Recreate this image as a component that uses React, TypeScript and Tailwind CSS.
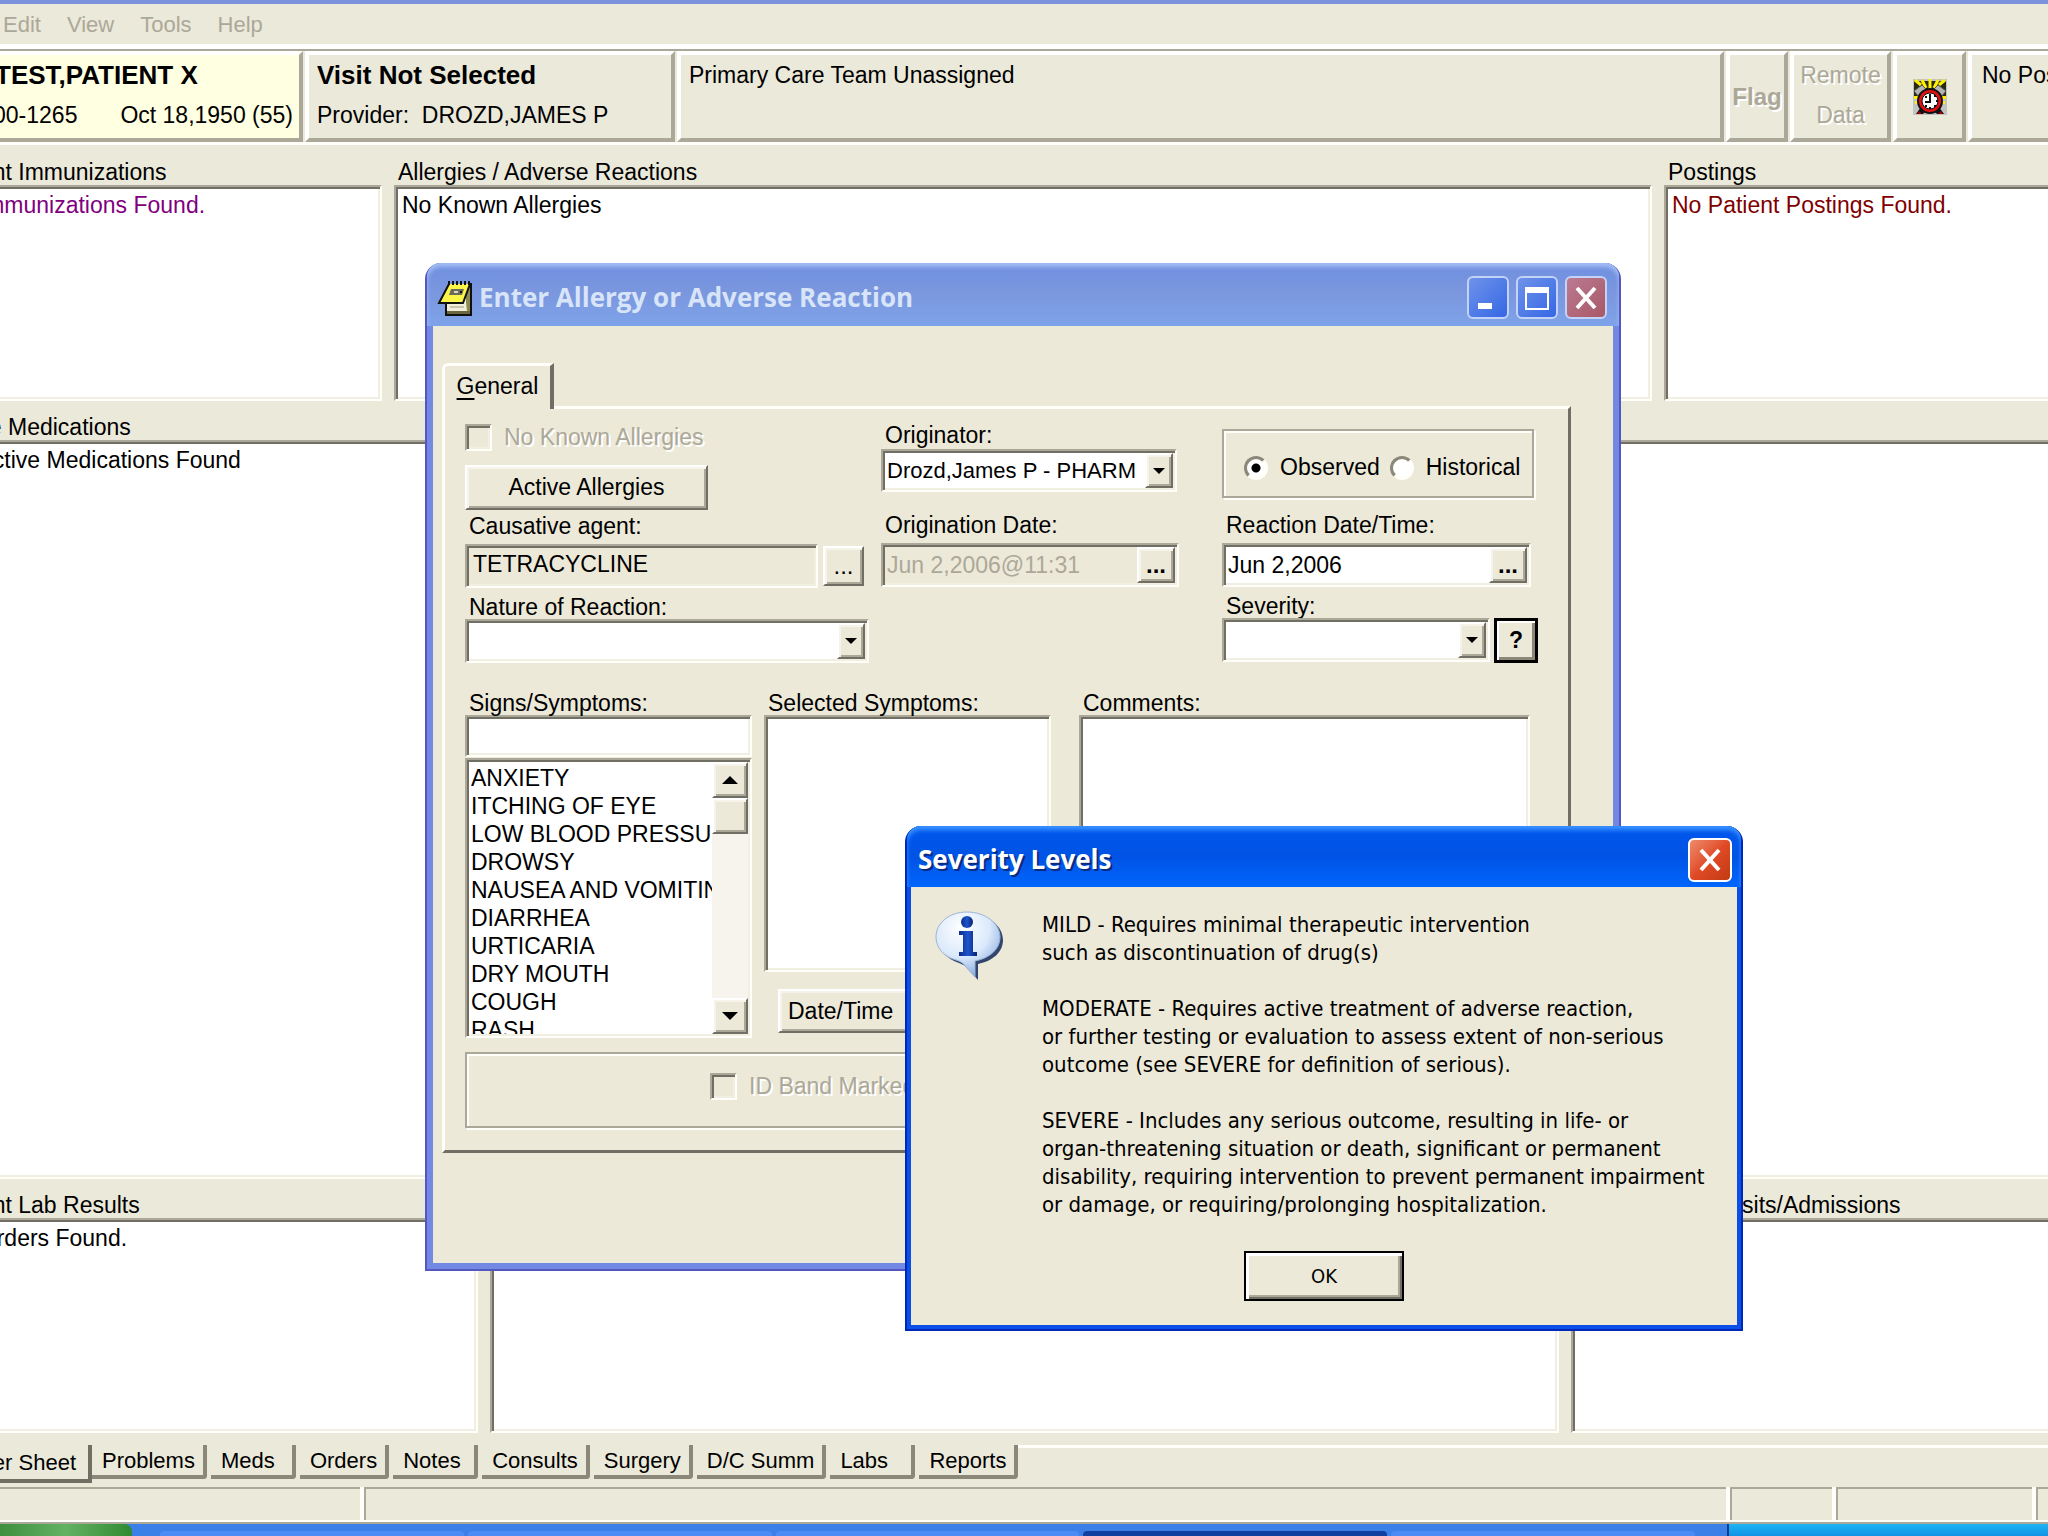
import React from "react";

const SUNKEN =
  "border-2 border-t-[#aca899] border-l-[#aca899] border-r-[#fffef8] border-b-[#fffef8] shadow-[inset_2px_2px_0_#716f64,inset_-2px_-2px_0_#f1efe2]";
const RAISED =
  "border-2 border-t-white border-l-white border-r-[#716f64] border-b-[#716f64] bg-[#ece9d8] shadow-[inset_2px_2px_0_#f6f4ea,inset_-2px_-2px_0_#aca899]";
const ETCHED =
  "border-2 border-[#aca899] shadow-[inset_2px_2px_0_#fffef8,2px_2px_0_#fffef8]";
const HEADER_PANEL =
  "border-t-4 border-l-4 border-r-4 border-b-4 border-t-white border-l-white border-r-[#aca899] border-b-[#aca899]";
const EMBOSSED = "text-[#aca899] [text-shadow:2px_2px_0_#fff]";

const symptoms = [
  "ANXIETY",
  "ITCHING OF EYE",
  "LOW BLOOD PRESSURE",
  "DROWSY",
  "NAUSEA AND VOMITING",
  "DIARRHEA",
  "URTICARIA",
  "DRY MOUTH",
  "COUGH",
  "RASH",
];

const chartTabs = [
  "Problems",
  "Meds",
  "Orders",
  "Notes",
  "Consults",
  "Surgery",
  "D/C Summ",
  "Labs",
  "Reports",
];

/* ---------- icons ---------- */

const NotepadIcon = () => (
  <svg width="36" height="36" viewBox="0 0 36 36" className="shrink-0" aria-hidden="true">
    <path d="M9 17h25v18H9z" fill="#f1efdc" />
    <path d="M9 31h25v4H9z" fill="#6b6840" />
    <path d="M29 5h5v26h-5z" fill="#8d8a50" />
    <path d="M28 14l2 17h-2z" fill="#f1efdc" />
    <path d="M12 4 33 4 26 23 2 23z" fill="#fbf549" />
    <path d="M12 4 2 23h24l7-19M34 3v32H9V24" fill="none" stroke="#111" strokeWidth="2" />
    <path d="M14 9h13l-2 6H12z" fill="#6b6b58" />
    <path d="M17 11h4v2h-4z" fill="#d8d8c8" />
    <path d="M23 11h2v2h-2z" fill="#111" />
    <path d="M11 3h24" stroke="#111" strokeWidth="4" strokeDasharray="2 2" />
    <path d="M13 27h14" stroke="#c9c5a8" strokeWidth="2" />
  </svg>
);

const AlarmIcon = () => (
  <svg width="34" height="36" viewBox="0 0 34 36" aria-hidden="true">
    <path d="M0 0h34v36H0z" fill="#c3c3c3" />
    <path d="M1 2h32v16H1z" fill="#2a2a12" />
    <path
      d="M17 10V0M13 9 9 1M21 9l4-8M8 6 2 1M26 6l6-5"
      stroke="#fdf000"
      strokeWidth="3"
    />
    <path d="M1 12 9 6l5 5-8 7zM33 12l-8-6-5 5 8 7z" fill="#b4b4b4" stroke="#555" strokeWidth="1" />
    <path d="M1 17h4v3H1zM2 22h3v3H2zM29 17h4v3h-4zM29 22h3v3h-3z" fill="#fdf000" />
    <path d="M8 28 3 35h7l4-4zM26 28l5 7h-7l-4-4z" fill="#111" />
    <path d="M6 32l-2 3h5zM28 32l2 3h-5z" fill="#a00000" />
    <circle cx="17" cy="22" r="13" fill="#111" />
    <circle cx="17" cy="22" r="11" fill="#e01010" />
    <circle cx="17" cy="22" r="8" fill="#fff" stroke="#111" strokeWidth="1" />
    <path d="M17 15v8h-5" fill="none" stroke="#111" strokeWidth="2" />
    <path d="M21 17h2M23 22h2M21 27h2M16 29h2M12 27h2M12 18h2" stroke="#111" strokeWidth="2" />
  </svg>
);

const InfoIcon = () => (
  <svg width="70" height="70" viewBox="0 0 70 70" className="shrink-0" aria-hidden="true">
    <defs>
      <radialGradient id="bubble" cx="0.4" cy="0.25" r="0.8">
        <stop offset="0" stopColor="#ffffff" />
        <stop offset="0.55" stopColor="#dbe9fb" />
        <stop offset="1" stopColor="#7fa5dc" />
      </radialGradient>
      <linearGradient id="letter" x1="0" y1="0" x2="1" y2="0">
        <stop offset="0" stopColor="#0d2c8c" />
        <stop offset="0.5" stopColor="#1d55cc" />
        <stop offset="1" stopColor="#0a2070" />
      </linearGradient>
    </defs>
    <path
      d="M36 4C18 4 4 15 4 29c0 11 8 19 20 23 5 2 7 3 10 7l9 10V53c15-3 25-12 25-24C68 15 54 4 36 4z"
      fill="#31456f"
    />
    <path
      d="M32 1C14 1 1 12 1 26c0 11 8 20 20 23 6 2 8 4 10 7l9 10V50c15-3 25-12 25-24C65 12 50 1 32 1z"
      fill="url(#bubble)"
      stroke="#9db4d6"
      strokeWidth="1"
    />
    <circle cx="32" cy="11" r="6" fill="url(#letter)" />
    <path d="M24 20h14v21h4v4H24v-4h4V24h-4z" fill="url(#letter)" />
  </svg>
);

const CloseGlyph = () => (
  <svg width="26" height="26" viewBox="0 0 26 26" aria-hidden="true">
    <path d="M4 3 22 23M22 3 4 23" stroke="#fff" strokeWidth="4" />
  </svg>
);

const Arrow = ({ up = false, wide = false }: { up?: boolean; wide?: boolean }) => (
  <svg width={wide ? 16 : 12} height={wide ? 8 : 6} viewBox="0 0 16 8" aria-hidden="true">
    <path d={up ? "M0 8 8 0l8 8z" : "M0 0h16L8 8z"} fill="#000" />
  </svg>
);

/* ---------- small form parts ---------- */

const FieldLabel = ({
  id,
  children,
  className = "h-7 leading-8",
}: {
  id: string;
  children: React.ReactNode;
  className?: string;
}) => (
  <label htmlFor={id} className={`block pl-1 whitespace-nowrap ${className}`}>
    {children}
  </label>
);

const ComboBox = ({ id, value, className }: { id: string; value?: string; className: string }) => (
  <div className={`flex bg-white p-0.5 text-[22px] ${SUNKEN} ${className}`}>
    <select id={id} className="min-w-0 flex-1 appearance-none bg-transparent pl-0.5 outline-none">
      <option>{value ?? ""}</option>
    </select>
    <span className={`pointer-events-none flex w-7 items-center justify-center ${RAISED}`}>
      <Arrow />
    </span>
  </div>
);

const DateBox = ({ id, value, disabled }: { id: string; value: string; disabled?: boolean }) => (
  <div className={`flex h-11 p-0.5 ${SUNKEN} ${disabled ? "" : "bg-white"}`}>
    <input
      id={id}
      defaultValue={value}
      disabled={disabled}
      className="min-w-0 flex-1 bg-transparent pl-0.5 outline-none disabled:text-[#aca899]"
    />
    <button
      type="button"
      aria-label="Pick a date"
      className={`w-[38px] text-2xl leading-6 font-bold ${RAISED}`}
    >
      ...
    </button>
  </div>
);

const DisabledCheck = ({ id, children }: { id: string; children: React.ReactNode }) => (
  <div className="flex h-7 items-center gap-3">
    <input id={id} type="checkbox" disabled className={`size-[27px] appearance-none ${SUNKEN}`} />
    <label htmlFor={id} className={`whitespace-nowrap ${EMBOSSED}`}>
      {children}
    </label>
  </div>
);

const Radio = ({ id, label, checked }: { id: string; label: string; checked?: boolean }) => (
  <div className="flex items-center gap-3">
    <input
      id={id}
      type="radio"
      name="kind"
      defaultChecked={checked}
      className="size-6 appearance-none rounded-full border-[3px] border-t-[#8b887a] border-r-[#fffef8] border-b-[#fffef8] border-l-[#8b887a] bg-white checked:bg-[radial-gradient(circle,#000_4px,#fff_5px)]"
    />
    <label htmlFor={id}>{label}</label>
  </div>
);

/* ---------- chart window behind the dialogs ---------- */

const ListPanel = ({
  title,
  text,
  className,
  textClass = "",
}: {
  title: string;
  text?: string;
  className: string;
  textClass?: string;
}) => (
  <section className={`flex min-w-0 flex-col ${className}`}>
    <h2 className="h-7 pl-1 leading-[30px] whitespace-nowrap">{title}</h2>
    <div className={`flex-1 bg-white pt-0.5 pl-1.5 leading-8 ${SUNKEN} ${textClass}`}>{text}</div>
  </section>
);

const PatientHeader = () => (
  <header className="flex h-[96px] gap-0.5 border-t-2 border-b-[3px] border-t-[#aca899] border-b-[#fffef8] leading-10">
    <button
      type="button"
      className={`w-[368px] bg-[#ffffe1] pb-1 text-left whitespace-nowrap ${HEADER_PANEL}`}
    >
      <span className="block pl-14 text-[26px] font-bold">TEST,PATIENT X</span>
      <span className="flex justify-between pr-1.5 pl-2">
        <span>000-00-1265</span>
        <span>Oct 18,1950 (55)</span>
      </span>
    </button>
    <button type="button" className={`w-[370px] pb-1 pl-2 text-left ${HEADER_PANEL}`}>
      <span className="block text-[26px] font-bold">Visit Not Selected</span>
      <span className="block whitespace-pre">Provider:  DROZD,JAMES P</span>
    </button>
    <button type="button" className={`flex flex-1 items-start pl-2 text-left ${HEADER_PANEL}`}>
      Primary Care Team Unassigned
    </button>
    <button type="button" disabled className={`w-[62px] text-2xl font-bold ${EMBOSSED} ${HEADER_PANEL}`}>
      Flag
    </button>
    <button type="button" disabled className={`w-[101px] pb-1 ${EMBOSSED} ${HEADER_PANEL}`}>
      <span className="block">Remote</span>
      <span className="block">Data</span>
    </button>
    <button
      type="button"
      aria-label="Reminders"
      className={`flex w-[73px] items-center justify-center ${HEADER_PANEL}`}
    >
      <AlarmIcon />
    </button>
    <button
      type="button"
      className={`-mr-16 flex w-[144px] items-start pl-2.5 whitespace-nowrap ${HEADER_PANEL}`}
    >
      No Postings
    </button>
  </header>
);

const ChartWindow = () => (
  <div className="-ml-[65px] flex min-h-0 flex-1 flex-col border-t-4 border-[#7b93dd] text-[23px]">
    <nav className="flex h-10 items-center gap-[26px] pl-[6px] text-[22px] text-[#aca899]">
      <span className="w-9">File</span>
      <span>Edit</span>
      <span>View</span>
      <span>Tools</span>
      <span>Help</span>
    </nav>
    <div className="h-[5px] bg-white" />
    <PatientHeader />

    <main className="flex min-h-0 flex-1 flex-col gap-[11px] pt-3 pb-3">
      <div className="flex h-[244px] gap-3">
        <ListPanel
          title="Recent Immunizations"
          text="No Immunizations Found."
          textClass="text-[#800080]"
          className="w-[447px]"
        />
        <ListPanel title="Allergies / Adverse Reactions" text="No Known Allergies" className="flex-1" />
        <ListPanel
          title="Postings"
          text="No Patient Postings Found."
          textClass="text-[#800000]"
          className="-mr-2 w-[392px]"
        />
      </div>
      <div className="flex min-h-0 flex-1 gap-3">
        <ListPanel title="Active Medications" text="No Active Medications Found" className="flex-1" />
        <ListPanel title="Clinical Reminders" className="-mr-2 flex-1" />
      </div>
      <div className="flex h-[243px] gap-3">
        <ListPanel title="Recent Lab Results" text="No Orders Found." className="w-[543px]" />
        <ListPanel title="Vitals" className="flex-1" />
        <ListPanel title="Appointments/Visits/Admissions" className="-mr-2 w-[485px]" />
      </div>
    </main>

    <div className="flex h-[42px] items-start text-[22px]">
      <button
        type="button"
        className="h-[38px] w-[157px] border-r-4 border-b-4 border-[#716f64] pr-3 text-right leading-9"
      >
        Cover Sheet
      </button>
      <div className="flex items-start gap-1">
        {chartTabs.map((tab) => (
          <button
            key={tab}
            type="button"
            className="h-[34px] min-w-[85px] rounded-br border-r-4 border-b-4 border-[#8b887a] px-2 pl-2.5 text-left leading-8"
          >
            {tab}
          </button>
        ))}
      </div>
      <div className="h-[3px] flex-1 bg-[#fffef8]" />
    </div>

    <footer className="flex h-[37px] gap-1 border-b-2 border-[#aca899] bg-[#fffef8] pb-0.5 [&>div]:border-t-2 [&>div]:border-l-2 [&>div]:border-[#aca899] [&>div]:bg-[#ebe9d9]">
      <div className="w-[425px]" />
      <div className="flex-1" />
      <div className="w-[102px]" />
      <div className="w-[196px]" />
      <div className="w-3" />
    </footer>
  </div>
);

const Taskbar = () => (
  <div className="flex h-3 items-end bg-[#3a80e6]">
    <div className="h-full w-[132px] rounded-tr-lg bg-linear-to-r from-[#3f8f3f] via-[#63b163] to-[#2f8a2f]" />
    <div className="flex h-[5px] flex-1 gap-1 pr-8 pl-7 [&>div]:flex-1 [&>div]:rounded-t-sm [&>div]:bg-[#4a8bf5]">
      <div />
      <div />
      <div />
      <div className="bg-[#1240a0]!" />
      <div />
    </div>
    <div className="h-full w-[321px] border-l-2 border-[#0a3a90] bg-linear-to-b from-[#1fb4f5] to-[#1193e4]" />
  </div>
);

/* ---------- dialogs ---------- */

const AllergyDialog = () => (
  <div
    role="dialog"
    aria-labelledby="allergy-title"
    className="absolute top-[263px] left-[425px] flex h-[1008px] w-[1196px] flex-col rounded-t-2xl border-x-2 border-b-2 border-[#5358c0] bg-[#7288e2] px-1.5 pb-1.5 text-[23px]"
  >
    <div className="-mx-1.5 flex h-[63px] items-center gap-1.5 rounded-t-[14px] bg-linear-to-b from-[#6f8fe0] via-[#7b97de] to-[#7ea3ea] px-2.5 pt-1.5 shadow-[inset_0_4px_4px_#a3bdf4]">
      <NotepadIcon />
      <h1
        id="allergy-title"
        className="flex-1 font-['Open_Sans','Noto_Sans',sans-serif] text-[26px] font-bold whitespace-nowrap text-[#d8e4f8]"
      >
        Enter Allergy or Adverse Reaction
      </h1>
      <div className="flex gap-[7px] pr-0.5 [&>button]:flex [&>button]:h-[43px] [&>button]:w-[42px] [&>button]:items-center [&>button]:justify-center [&>button]:rounded-md [&>button]:border-2 [&>button]:border-[#c3d3f7]">
        <button type="button" aria-label="Minimize" className="bg-linear-to-br from-[#6f92ea] to-[#3567e4]">
          <svg width="26" height="26" viewBox="0 0 26 26" aria-hidden="true">
            <path d="M3 18h14v6H3z" fill="#fff" />
          </svg>
        </button>
        <button type="button" aria-label="Maximize" className="bg-linear-to-br from-[#6f92ea] to-[#3567e4]">
          <svg width="26" height="26" viewBox="0 0 26 26" aria-hidden="true">
            <path d="M2 3h22v21H2z" fill="none" stroke="#fff" strokeWidth="2" />
            <path d="M1 2h24v6H1z" fill="#fff" />
          </svg>
        </button>
        <button type="button" aria-label="Close" className="bg-linear-to-br from-[#bb7a93] to-[#a95866]">
          <CloseGlyph />
        </button>
      </div>
    </div>

    <div className="flex-1 bg-[#ece9d8] pt-[37px] pr-[42px] pl-[9px]">
      <button
        type="button"
        role="tab"
        className="relative z-10 -mb-[3px] block h-[46px] w-[112px] rounded-tl-md border-t-[3px] border-r-4 border-l-[3px] border-t-[#fffef8] border-r-[#716f64] border-l-[#fffef8] bg-[#ece9d8] pb-1 leading-8"
      >
        <u className="underline-offset-4">G</u>eneral
      </button>

      <form className="border-[3px] border-t-[#fffef8] border-r-[#716f64] border-b-[#716f64] border-l-[#fffef8] pt-2.5 pr-[30px] pb-[22px] pl-5">
        <div className="flex items-start">
          <div className="w-[404px] pt-1">
            <DisabledCheck id="nka">No Known Allergies</DisabledCheck>
            <button type="button" className={`mt-3.5 block h-[45px] w-[243px] ${RAISED}`}>
              Active Allergies
            </button>
            <div className="mt-0.5">
              <FieldLabel id="agent" className="h-8 leading-7">
                Causative agent:
              </FieldLabel>
              <div className="flex items-center gap-[5px]">
                <input
                  id="agent"
                  readOnly
                  defaultValue="TETRACYCLINE"
                  className={`h-11 w-[353px] bg-transparent pb-1 pl-1.5 outline-none ${SUNKEN}`}
                />
                <button type="button" aria-label="Find agent" className={`h-10 w-[41px] text-2xl ${RAISED}`}>
                  ...
                </button>
              </div>
            </div>
            <div className="mt-[3px]">
              <FieldLabel id="nature">Nature of Reaction:</FieldLabel>
              <ComboBox id="nature" className="h-11" />
            </div>
          </div>

          <div className="ml-3 w-[298px]">
            <FieldLabel id="originator">Originator:</FieldLabel>
            <ComboBox id="originator" value="Drozd,James P - PHARM" className="mt-0.5 mr-0.5 h-[43px]" />
            <div className="mt-[19px]">
              <FieldLabel id="orig-date" className="h-8 leading-7">
                Origination Date:
              </FieldLabel>
              <DateBox id="orig-date" value="Jun 2,2006@11:31" disabled />
            </div>
          </div>

          <div className="ml-[43px] w-[316px] pt-2.5">
            <fieldset className={`flex h-[69px] w-[312px] items-center gap-2.5 pt-2 pl-5 ${ETCHED}`}>
              <Radio id="observed" label="Observed" checked />
              <Radio id="historical" label="Historical" />
            </fieldset>
            <div className="mt-[13px] w-[309px]">
              <FieldLabel id="react-date" className="h-8 leading-7">
                Reaction Date/Time:
              </FieldLabel>
              <DateBox id="react-date" value="Jun 2,2006" />
            </div>
            <div className="mt-[3px]">
              <FieldLabel id="severity">Severity:</FieldLabel>
              <div className="flex gap-1">
                <ComboBox id="severity" className="h-11 flex-1" />
                <button
                  type="button"
                  aria-label="Severity help"
                  className="h-[45px] w-11 border-[3px] border-black bg-[#ece9d8] font-bold shadow-[inset_2px_2px_0_#fff,inset_-3px_-3px_0_#8b887a]"
                >
                  ?
                </button>
              </div>
            </div>
          </div>
        </div>

        <div className="mt-6 flex items-start">
          <div className="w-[287px]">
            <FieldLabel id="signs">Signs/Symptoms:</FieldLabel>
            <input id="signs" className={`block h-[42px] w-full bg-white px-1 outline-none ${SUNKEN}`} />
            <div className={`mt-px flex h-[280px] bg-white p-0.5 ${SUNKEN}`}>
              <ul
                aria-label="Signs/Symptoms"
                className="min-w-0 flex-1 overflow-hidden pt-0.5 pl-0.5 leading-7"
              >
                {symptoms.map((s) => (
                  <li key={s} className="overflow-hidden whitespace-nowrap">
                    {s}
                  </li>
                ))}
              </ul>
              <div className="flex w-9 flex-col bg-[#f6f4ec]">
                <button
                  type="button"
                  aria-label="Scroll up"
                  className={`flex h-9 items-center justify-center ${RAISED}`}
                >
                  <Arrow up wide />
                </button>
                <div className={`h-9 ${RAISED}`} />
                <div className="flex-1" />
                <button
                  type="button"
                  aria-label="Scroll down"
                  className={`flex h-9 items-center justify-center ${RAISED}`}
                >
                  <Arrow wide />
                </button>
              </div>
            </div>
          </div>

          <div className="ml-3 w-[287px]">
            <FieldLabel id="selected">Selected Symptoms:</FieldLabel>
            <textarea id="selected" readOnly className={`block h-[257px] w-full resize-none bg-white ${SUNKEN}`} />
            <button type="button" className={`mt-[17px] ml-3.5 h-11 w-[150px] pl-2 text-left ${RAISED}`}>
              Date/Time
            </button>
          </div>

          <div className="ml-7 w-[451px]">
            <FieldLabel id="comments">Comments:</FieldLabel>
            <textarea id="comments" className={`block h-[257px] w-full resize-none bg-white ${SUNKEN}`} />
          </div>
        </div>

        <div className={`mt-3.5 flex h-[76px] items-center pb-2 pl-[243px] ${ETCHED}`}>
          <DisabledCheck id="id-band">ID Band Marked</DisabledCheck>
        </div>
      </form>
    </div>
  </div>
);

const SeverityDialog = () => (
  <div
    role="dialog"
    aria-labelledby="severity-title"
    className="absolute top-[826px] left-[905px] flex h-[505px] w-[838px] flex-col rounded-t-2xl border-x-2 border-b-2 border-[#0028b8] bg-[#0a50e8] px-1 pb-1 font-['DejaVu_Sans_Condensed','Noto_Sans',sans-serif] text-[22px]"
  >
    <div className="-mx-1 flex h-[61px] items-center rounded-t-[14px] bg-linear-to-b from-[#0058ee] via-[#0053e4] to-[#0066fe] pt-1.5 pr-[9px] pl-[11px] shadow-[inset_0_4px_4px_#3a92ff]">
      <h1
        id="severity-title"
        className="flex-1 font-['Open_Sans','Noto_Sans',sans-serif] text-[26px] font-bold text-white [text-shadow:2px_2px_0_#0a2a80]"
      >
        Severity Levels
      </h1>
      <button
        type="button"
        aria-label="Close"
        className="flex h-11 w-[44px] items-center justify-center rounded-md border-2 border-white bg-linear-to-br from-[#ee8a6c] via-[#e04a25] to-[#c23a12]"
      >
        <CloseGlyph />
      </button>
    </div>

    <div className="flex flex-1 flex-col items-center justify-between bg-[#ece9d8] pt-6 pb-6">
      <div className="flex w-full gap-[37px] pl-6">
        <InfoIcon />
        <p className="leading-[28px] whitespace-pre">
          {`MILD - Requires minimal therapeutic intervention
such as discontinuation of drug(s)

MODERATE - Requires active treatment of adverse reaction,
or further testing or evaluation to assess extent of non-serious
outcome (see SEVERE for definition of serious).

SEVERE - Includes any serious outcome, resulting in life- or
organ-threatening situation or death, significant or permanent
disability, requiring intervention to prevent permanent impairment
or damage, or requiring/prolonging hospitalization.`}
        </p>
      </div>
      <button
        type="button"
        className="h-[50px] w-40 border-2 border-black bg-[#ece9d8] text-xl shadow-[inset_3px_3px_0_#fff,inset_-2px_-2px_0_#716f64,inset_-4px_-4px_0_#aca899]"
      >
        OK
      </button>
    </div>
  </div>
);

const App = () => (
  <div className="relative flex h-screen flex-col overflow-hidden bg-[#ebe9d9] font-['Liberation_Sans',Arial,sans-serif] text-black">
    <ChartWindow />
    <Taskbar />
    <AllergyDialog />
    <SeverityDialog />
  </div>
);

export default App;
